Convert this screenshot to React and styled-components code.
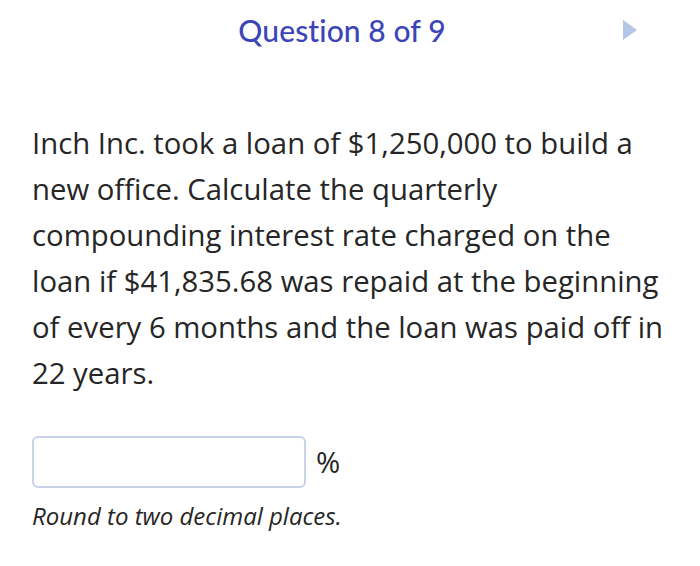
import React from "react";
import styled, { createGlobalStyle } from "styled-components";

const Global = createGlobalStyle`
  html, body { margin: 0; padding: 0; background: #fff; }
  body { width: 700px; height: 566px; overflow: hidden; }
`;

const Page = styled.div`
  width: 700px;
  height: 566px;
  display: flex;
  flex-direction: column;
  background: #fff;
`;

const Header = styled.header`
  height: 60px;
  display: grid;
  grid-template-columns: 1fr auto 1fr;
  align-items: center;
  padding-right: 16px;
`;

const Title = styled.h1`
  grid-column: 2;
  margin: 0;
  font-family: Lato, "Open Sans", sans-serif;
  font-weight: 500;
  font-size: 30px;
  color: #3b45b8;
  letter-spacing: 0.1px;
`;

const NextButton = styled.button`
  grid-column: 3;
  justify-self: end;
  margin-right: 46px;
  width: 16px;
  height: 22px;
  padding: 0;
  border: none;
  background: transparent;
  display: flex;
`;

const Body = styled.main`
  padding: 60px 32px 0 32px;
  display: flex;
  flex-direction: column;
`;

const Question = styled.p`
  margin: 0;
  font-family: "Open Sans", sans-serif;
  font-size: 29.3px;
  line-height: 46px;
  color: #262626;
  max-width: 640px;
`;

const AnswerRow = styled.div`
  margin-top: 40px;
  display: flex;
  align-items: center;
  gap: 10px;
`;

const Input = styled.input`
  width: 274px;
  height: 52px;
  box-sizing: border-box;
  border: 2.5px solid #c8d3e8;
  border-radius: 6px;
  outline: none;
  background: #fff;
`;

const Unit = styled.span`
  font-family: "Open Sans", sans-serif;
  font-size: 29.3px;
  color: #262626;
`;

const Hint = styled.p`
  margin: 11px 0 0 0;
  font-family: "Open Sans", sans-serif;
  font-style: italic;
  font-size: 24px;
  color: #262626;
`;

export default function App() {
  return (
    <Page>
      <Global />
      <Header>
        <Title>Question 8 of 9</Title>
        <NextButton aria-label="Next question">
          <svg width="16" height="22" viewBox="0 0 16 22">
            <polygon points="1,1 15,11 1,21" fill="#b3c6e8" />
          </svg>
        </NextButton>
      </Header>
      <Body>
        <Question>
          Inch Inc. took a loan of $1,250,000 to build a new office. Calculate
          the quarterly compounding interest rate charged on the loan if
          $41,835.68 was repaid at the beginning of every 6 months and the loan
          was paid off in 22 years.
        </Question>
        <AnswerRow>
          <Input type="text" aria-label="Answer" />
          <Unit>%</Unit>
        </AnswerRow>
        <Hint>Round to two decimal places.</Hint>
      </Body>
    </Page>
  );
}
